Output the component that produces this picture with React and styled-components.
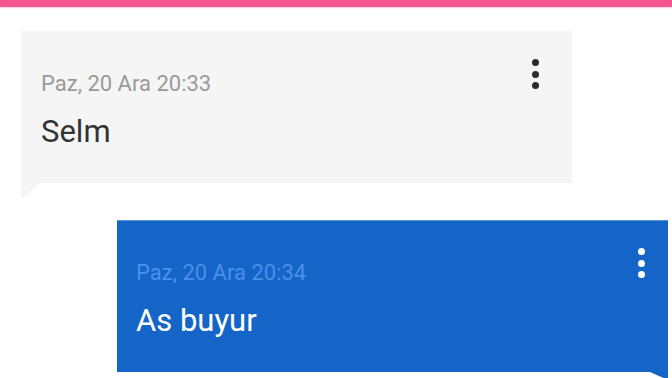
import React from 'react'
import styled, { createGlobalStyle } from 'styled-components'

const Colors = {
    pink: '#f7548f',
    grey: '#f5f5f5',
    blue: '#1565c8',
    blueStamp: '#4a8fe8',
    greyStamp: '#9a9a9a',
    text: '#333333',
    white: '#ffffff',
}

const GlobalStyle = createGlobalStyle`
    html, body {
        margin: 0;
        padding: 0;
        background: #ffffff;
        font-family: Roboto, 'Liberation Sans', sans-serif;
    }
`;

const Page = styled.div`
    width: 672px;
    height: 378px;
    overflow: hidden;
    display: flex;
    flex-direction: column;
`;

const TopBar = styled.div`
    height: 7px;
    background-color: ${Colors.pink};
    box-shadow: 0 1px 2px rgba(247, 84, 143, 0.3);
`;

const Thread = styled.div`
    display: flex;
    flex-direction: column;
    gap: 38px;
    padding-top: 24px;
`;

const Bubble = styled.div`
    position: relative;
    box-sizing: border-box;
    width: 551px;
    height: ${p => (p.$mine ? '151px' : '152px')};
    margin-left: ${p => (p.$mine ? '117px' : '21px')};
    padding: ${p => (p.$mine ? '27px 21px 0 19px' : '28px 31px 0 20px')};
    background-color: ${p => (p.$mine ? Colors.blue : Colors.grey)};
    box-shadow: ${p => (p.$mine ? '0 -1px 0 #5a95dc' : '0 0 1px rgba(0, 0, 0, 0.06)')};
    display: flex;
    flex-direction: column;
    &::after {
        content: '';
        position: absolute;
        top: 100%;
        width: 0;
        height: 0;
        border-top: ${p => (p.$mine ? '8px' : '17px')} solid ${p => (p.$mine ? Colors.blue : Colors.grey)};
        ${p => (p.$mine
            ? 'right: 0; border-left: 18px solid transparent;'
            : 'left: 0; border-right: 19px solid transparent;')}
    }
`;

const Header = styled.div`
    display: flex;
    justify-content: space-between;
    align-items: flex-start;
`;

const Stamp = styled.span`
    margin-top: 12px;
    font-size: 22px;
    line-height: 26px;
    color: ${p => (p.$mine ? Colors.blueStamp : Colors.greyStamp)};
`;

const Menu = styled.div`
    display: flex;
    flex-direction: column;
    gap: 4.7px;
    padding: 0 2px;
    & > span {
        width: 7px;
        height: 7px;
        border-radius: 50%;
        background-color: ${p => (p.$mine ? Colors.white : '#2b2b2b')};
    }
`;

const Message = styled.div`
    margin-top: 17px;
    font-size: 31px;
    line-height: 36px;
    color: ${p => (p.$mine ? Colors.white : Colors.text)};
`;

const messages = [
    { id: 1, mine: false, stamp: 'Paz, 20 Ara 20:33', text: 'Selm' },
    { id: 2, mine: true, stamp: 'Paz, 20 Ara 20:34', text: 'As buyur' },
]

export default function App() {
    return (
        <>
            <GlobalStyle />
            <Page>
                <TopBar />
                <Thread>
                    {messages.map(m => (
                        <Bubble key={m.id} $mine={m.mine}>
                            <Header>
                                <Stamp $mine={m.mine}>{m.stamp}</Stamp>
                                <Menu $mine={m.mine}>
                                    <span />
                                    <span />
                                    <span />
                                </Menu>
                            </Header>
                            <Message $mine={m.mine}>{m.text}</Message>
                        </Bubble>
                    ))}
                </Thread>
            </Page>
        </>
    )
}
